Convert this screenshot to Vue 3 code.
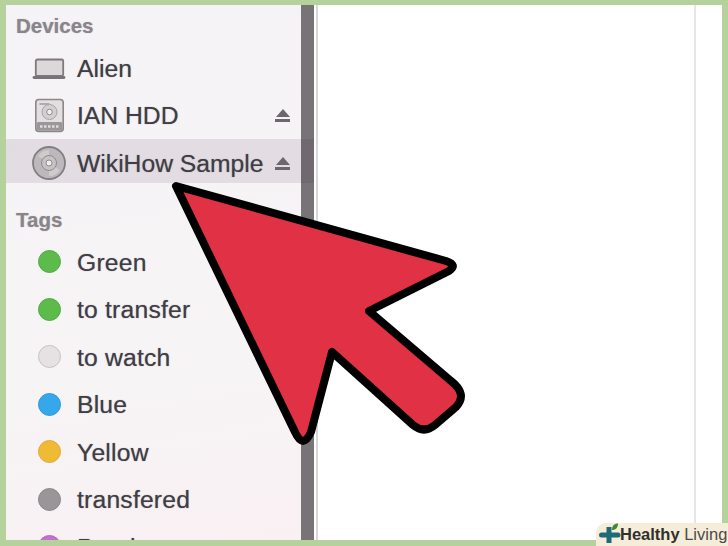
<script setup>
const tags = [
  { name: 'Green', color: '#5cbb4a', border: '#54ab45' },
  { name: 'to transfer', color: '#5cbb4a', border: '#54ab45' },
  { name: 'to watch', color: '#e6e2e4', border: '#c6c2c4' },
  { name: 'Blue', color: '#35a8ec', border: '#3399d8' },
  { name: 'Yellow', color: '#efbb36', border: '#deae38' },
  { name: 'transfered', color: '#9a9598', border: '#8b878a' },
  { name: 'Purple', color: '#c56fd0', border: '#b566c0' },
]
</script>

<template>
  <div class="frame">
    <div class="window">
      <aside class="sidebar">
        <h2 class="head head-devices">Devices</h2>
        <div class="row">
          <span class="ico">
            <svg width="45" height="24" viewBox="0 0 45 24">
              <rect x="3.800" y="3.500" width="27.400" height="16.500" rx="1.500" fill="#dcd8da" stroke="#7d797c" stroke-width="1.800" />
              <path d="M2 21.500h30" stroke="#77737a" stroke-width="2.800" stroke-linecap="round" />
            </svg>
          </span>
          <span class="label">Alien</span>
        </div>
        <div class="row">
          <span class="ico">
            <svg width="45" height="36" viewBox="0 0 45 36">
              <rect x="3.800" y="2.500" width="27.400" height="32" rx="3" fill="#e2dfe1" stroke="#8b878a" stroke-width="1.600" />
              <rect x="4.600" y="25" width="25.800" height="8.700" rx="1.500" fill="#9a9699" />
              <path d="M7.500 7h10" stroke="#8b878a" stroke-width="1.200" />
              <circle cx="17.500" cy="15" r="7.500" fill="#d3cfd1" stroke="#a8a4a6" stroke-width="1" />
              <circle cx="17.500" cy="15" r="2.800" fill="#efedee" stroke="#8f8b8e" stroke-width="1" />
              <path d="M8 29.500h19" stroke="#dedcdd" stroke-width="2.500" stroke-dasharray="2.500 1.500" />
            </svg>
          </span>
          <span class="label">IAN HDD</span>
          <span class="eject" aria-hidden="true"><i class="tri"></i><i class="bar"></i></span>
        </div>
        <div class="row selected">
          <span class="ico">
            <svg width="45" height="36" viewBox="0 0 45 36">
              <circle cx="17" cy="18" r="16" fill="#bdb8bb" stroke="#827e81" stroke-width="1.800" />
              <path d="M6 11a13 13 0 0 1 11-6l0 13zM28 25a13 13 0 0 1-11 6l0-13z" fill="#cfcbcd" />
              <circle cx="17" cy="18" r="7.500" fill="#c7c3c5" stroke="#8f8b8e" stroke-width="1" />
              <circle cx="17" cy="18" r="3" fill="#eeeced" stroke="#8f8b8e" stroke-width="1" />
            </svg>
          </span>
          <span class="label">WikiHow Sample</span>
          <span class="eject" aria-hidden="true"><i class="tri"></i><i class="bar"></i></span>
        </div>
        <h2 class="head head-tags">Tags</h2>
        <div v-for="tag in tags" :key="tag.name" class="row tag">
          <span class="ico">
            <span class="dot" :style="{ background: tag.color, borderColor: tag.border }"></span>
          </span>
          <span class="label">{{ tag.name }}</span>
        </div>
      </aside>
      <div class="divider"></div>
      <main class="content">
        <div class="right-line"></div>
      </main>
    </div>

    <svg class="arrow" width="300" height="280" viewBox="170 180 300 280">
      <path d="M176 186 L446 261 Q458 265 449 271 L369 311 L451 381 Q468 394 456 407 L435 425 Q424 434 413 425 L332 352 L311 432 Q303 450 295 432 Z"
        fill="#e03244" stroke="#000" stroke-width="8" stroke-linejoin="round" />
    </svg>

    <div class="badge">
      <svg class="badge-ico" width="24" height="23" viewBox="0 0 24 23">
        <path d="M9.500 4h5v5.500H21a2.500 2.500 0 0 1 0 5h-6.500V20h-5v-5.500H4.500a2.500 2.500 0 0 1 0-5h5z" fill="#1f6a78" />
        <path d="M15 7c0-4 2-6.500 6-6.500 0 4-2 6.500-6 6.500z" fill="#3f8a3a" />
      </svg>
      <span class="brand"><b>Healthy</b> Living</span>
    </div>
  </div>
</template>

<style>
html, body { margin: 0; padding: 0; }
</style>

<style scoped>
.frame {
  position: relative;
  width: 728px;
  height: 546px;
  overflow: hidden;
  background: #b5d29c;
  padding: 5px 6px 6px 6px;
  box-sizing: border-box;
  font-family: "Liberation Sans", Arial, sans-serif;
}
.window {
  display: flex;
  height: 100%;
  background: #fff;
  overflow: hidden;
}
.sidebar {
  position: relative;
  z-index: 1;
  width: 295px;
  flex: none;
  background: linear-gradient(170deg, #f5f3f5 0%, #f7f4f6 70%, #f9f0f2 100%);
  box-sizing: border-box;
}
.head {
  margin: 0 0 7px;
  font-size: 20.500px;
  font-weight: 700;
  line-height: 22px;
  color: #89858a;
  padding-left: 10px;
  text-shadow: 0 0 1px rgba(137, 133, 138, 0.6);
}
.head-devices { padding-top: 10px; }
.head-tags { margin-top: 26px; }
.row {
  display: flex;
  align-items: center;
  height: 47.500px;
  padding-left: 26px;
  padding-right: 11px;
  box-sizing: border-box;
}
.row.selected {
  height: 44px;
  padding-top: 4px;
  padding-right: 24px;
  background: rgba(60, 20, 60, 0.1);
  margin-right: -13px;
}
.ico {
  width: 45px;
  flex: none;
  display: flex;
  align-items: center;
}
.dot {
  width: 23px;
  height: 23px;
  margin-left: 6px;
  border-radius: 50%;
  box-sizing: border-box;
  border: 1px solid;
}
.label {
  font-size: 24.700px;
  color: #403d45;
  white-space: nowrap;
  margin-top: 2px;
  text-shadow: 0 0 1px rgba(64, 61, 69, 0.55);
}
.tag .label { letter-spacing: 0.2px; }
.eject {
  margin-left: auto;
  width: 15px;
  display: flex;
  flex-direction: column;
  gap: 2px;
  align-items: center;
}
.tri {
  width: 0;
  height: 0;
  border-left: 7.500px solid transparent;
  border-right: 7.500px solid transparent;
  border-bottom: 8px solid #6b676c;
}
.bar {
  width: 15px;
  height: 3px;
  background: #6b676c;
}
.divider {
  width: 13px;
  flex: none;
  background: #777377;
}
.content {
  flex: 1;
  display: flex;
  justify-content: flex-end;
  background: #fff;
  border-left: 2px solid #d8d8d8;
  margin-left: 2px;
}
.right-line {
  width: 2px;
  height: 100%;
  background: #e6e6e6;
  margin-right: 26px;
}
.arrow {
  position: absolute;
  z-index: 2;
  left: 170px;
  top: 180px;
}
.badge {
  position: absolute;
  z-index: 2;
  right: 0;
  bottom: 0;
  width: 132px;
  height: 23px;
  background: #f5edd8;
  border-top-left-radius: 10px;
  display: flex;
  align-items: center;
}
.badge-ico { flex: none; margin-left: 1px; }
.brand {
  font-size: 16.500px;
  color: #4a4a4a;
  white-space: nowrap;
  margin-left: -1px;
}
.brand b { color: #303030; }
</style>
